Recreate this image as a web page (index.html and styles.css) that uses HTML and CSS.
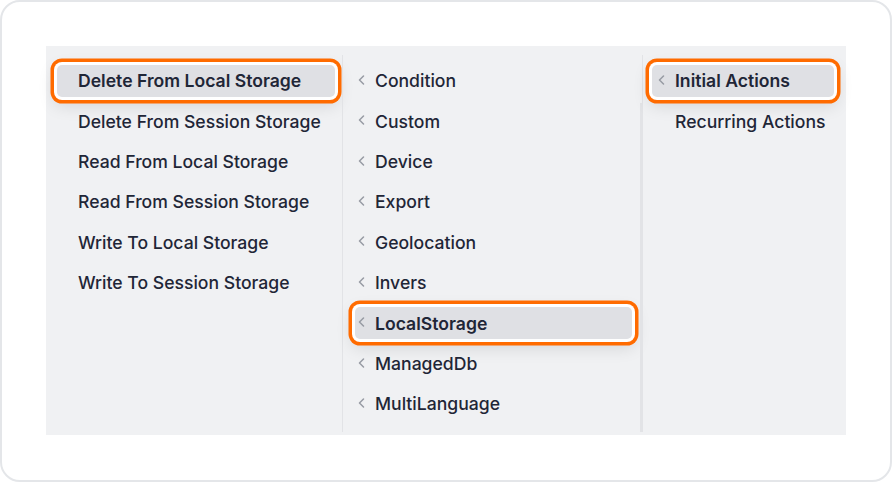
FILE: index.html
```html
<!DOCTYPE html>
<html>
<head>
<meta charset="utf-8">
<link rel="stylesheet" href="styles.css">
</head>
<body>
<div class="card">
  <div class="panel">
    <div class="col col1">
      <div class="row"><div class="pill sel"><span class="label">Delete From Local Storage</span></div></div>
      <div class="row"><div class="pill"><span class="label">Delete From Session Storage</span></div></div>
      <div class="row"><div class="pill"><span class="label">Read From Local Storage</span></div></div>
      <div class="row"><div class="pill"><span class="label">Read From Session Storage</span></div></div>
      <div class="row"><div class="pill"><span class="label">Write To Local Storage</span></div></div>
      <div class="row"><div class="pill"><span class="label">Write To Session Storage</span></div></div>
    </div>
    <div class="col col2">
      <div class="row"><div class="pill"><svg class="chev" viewBox="0 0 7 10"><path d="M5.5 1 L1.5 5 L5.5 9"/></svg><span class="label">Condition</span></div></div>
      <div class="row"><div class="pill"><svg class="chev" viewBox="0 0 7 10"><path d="M5.5 1 L1.5 5 L5.5 9"/></svg><span class="label">Custom</span></div></div>
      <div class="row"><div class="pill"><svg class="chev" viewBox="0 0 7 10"><path d="M5.5 1 L1.5 5 L5.5 9"/></svg><span class="label">Device</span></div></div>
      <div class="row"><div class="pill"><svg class="chev" viewBox="0 0 7 10"><path d="M5.5 1 L1.5 5 L5.5 9"/></svg><span class="label">Export</span></div></div>
      <div class="row"><div class="pill"><svg class="chev" viewBox="0 0 7 10"><path d="M5.5 1 L1.5 5 L5.5 9"/></svg><span class="label">Geolocation</span></div></div>
      <div class="row"><div class="pill"><svg class="chev" viewBox="0 0 7 10"><path d="M5.5 1 L1.5 5 L5.5 9"/></svg><span class="label">Invers</span></div></div>
      <div class="row"><div class="pill sel"><svg class="chev" viewBox="0 0 7 10"><path d="M5.5 1 L1.5 5 L5.5 9"/></svg><span class="label">LocalStorage</span></div></div>
      <div class="row"><div class="pill"><svg class="chev" viewBox="0 0 7 10"><path d="M5.5 1 L1.5 5 L5.5 9"/></svg><span class="label">ManagedDb</span></div></div>
      <div class="row"><div class="pill"><svg class="chev" viewBox="0 0 7 10"><path d="M5.5 1 L1.5 5 L5.5 9"/></svg><span class="label">MultiLanguage</span></div></div>
      <div class="thumb"></div>
    </div>
    <div class="col col3">
      <div class="row"><div class="pill sel"><svg class="chev" viewBox="0 0 7 10"><path d="M5.5 1 L1.5 5 L5.5 9"/></svg><span class="label">Initial Actions</span></div></div>
      <div class="row"><div class="pill nochev"><span class="label">Recurring Actions</span></div></div>
    </div>
  </div>
</div>
</body>
</html>
```
FILE: styles.css
```css
* { box-sizing: border-box; }
html, body { margin: 0; padding: 0; background: #ffffff; }
body { font-family: Inter, "Noto Sans", sans-serif; color: #1f2637; }

.card {
  width: 892px;
  height: 482px;
  border: 2px solid #e4e6e9;
  border-radius: 20px;
  padding: 44px;
  background: #ffffff;
}

.panel {
  display: grid;
  grid-template-columns: 297px 300px 203px;
  height: 389px;
  background: #f0f1f3;
}

.col {
  position: relative;
  padding-top: 14.6px;
}

.col1::after, .col2::after {
  content: "";
  position: absolute;
  right: 0;
  top: 9px;
  bottom: 3px;
  width: 1px;
  background: #e2e3e6;
}

.thumb {
  position: absolute;
  right: 0;
  top: 57px;
  bottom: 3px;
  width: 3px;
  background: #e2e3e6;
}

.row {
  height: 40.4px;
  display: flex;
  align-items: center;
}

.pill {
  flex: 1;
  height: 32px;
  display: flex;
  align-items: center;
  border-radius: 5px;
  font-size: 17.6px;
  font-weight: 500;
  white-space: nowrap;
}

.pill.sel {
  background: #dfe0e4;
  font-weight: 600;
  box-shadow: 0 0 0 3px #ffffff, 0 0 0 6.5px #ff6b00, 0 6px 16px 4px rgba(0, 0, 0, 0.10);
}

.col1 .pill { margin: 0 8px 0 11px; padding-left: 21px; }
.col2 .pill { margin: 0 11px 0 12px; padding-left: 3px; }
.col3 .pill { margin: 0 12px 0 9px; padding-left: 6px; }
.col3 .pill.nochev { padding-left: 23px; }

.chev {
  width: 7px;
  height: 10px;
  margin-right: 10px;
  flex: none;
  position: relative;
  top: -1px;
}
.chev path {
  fill: none;
  stroke: #969aa3;
  stroke-width: 1.5;
  stroke-linecap: round;
  stroke-linejoin: round;
}
```
